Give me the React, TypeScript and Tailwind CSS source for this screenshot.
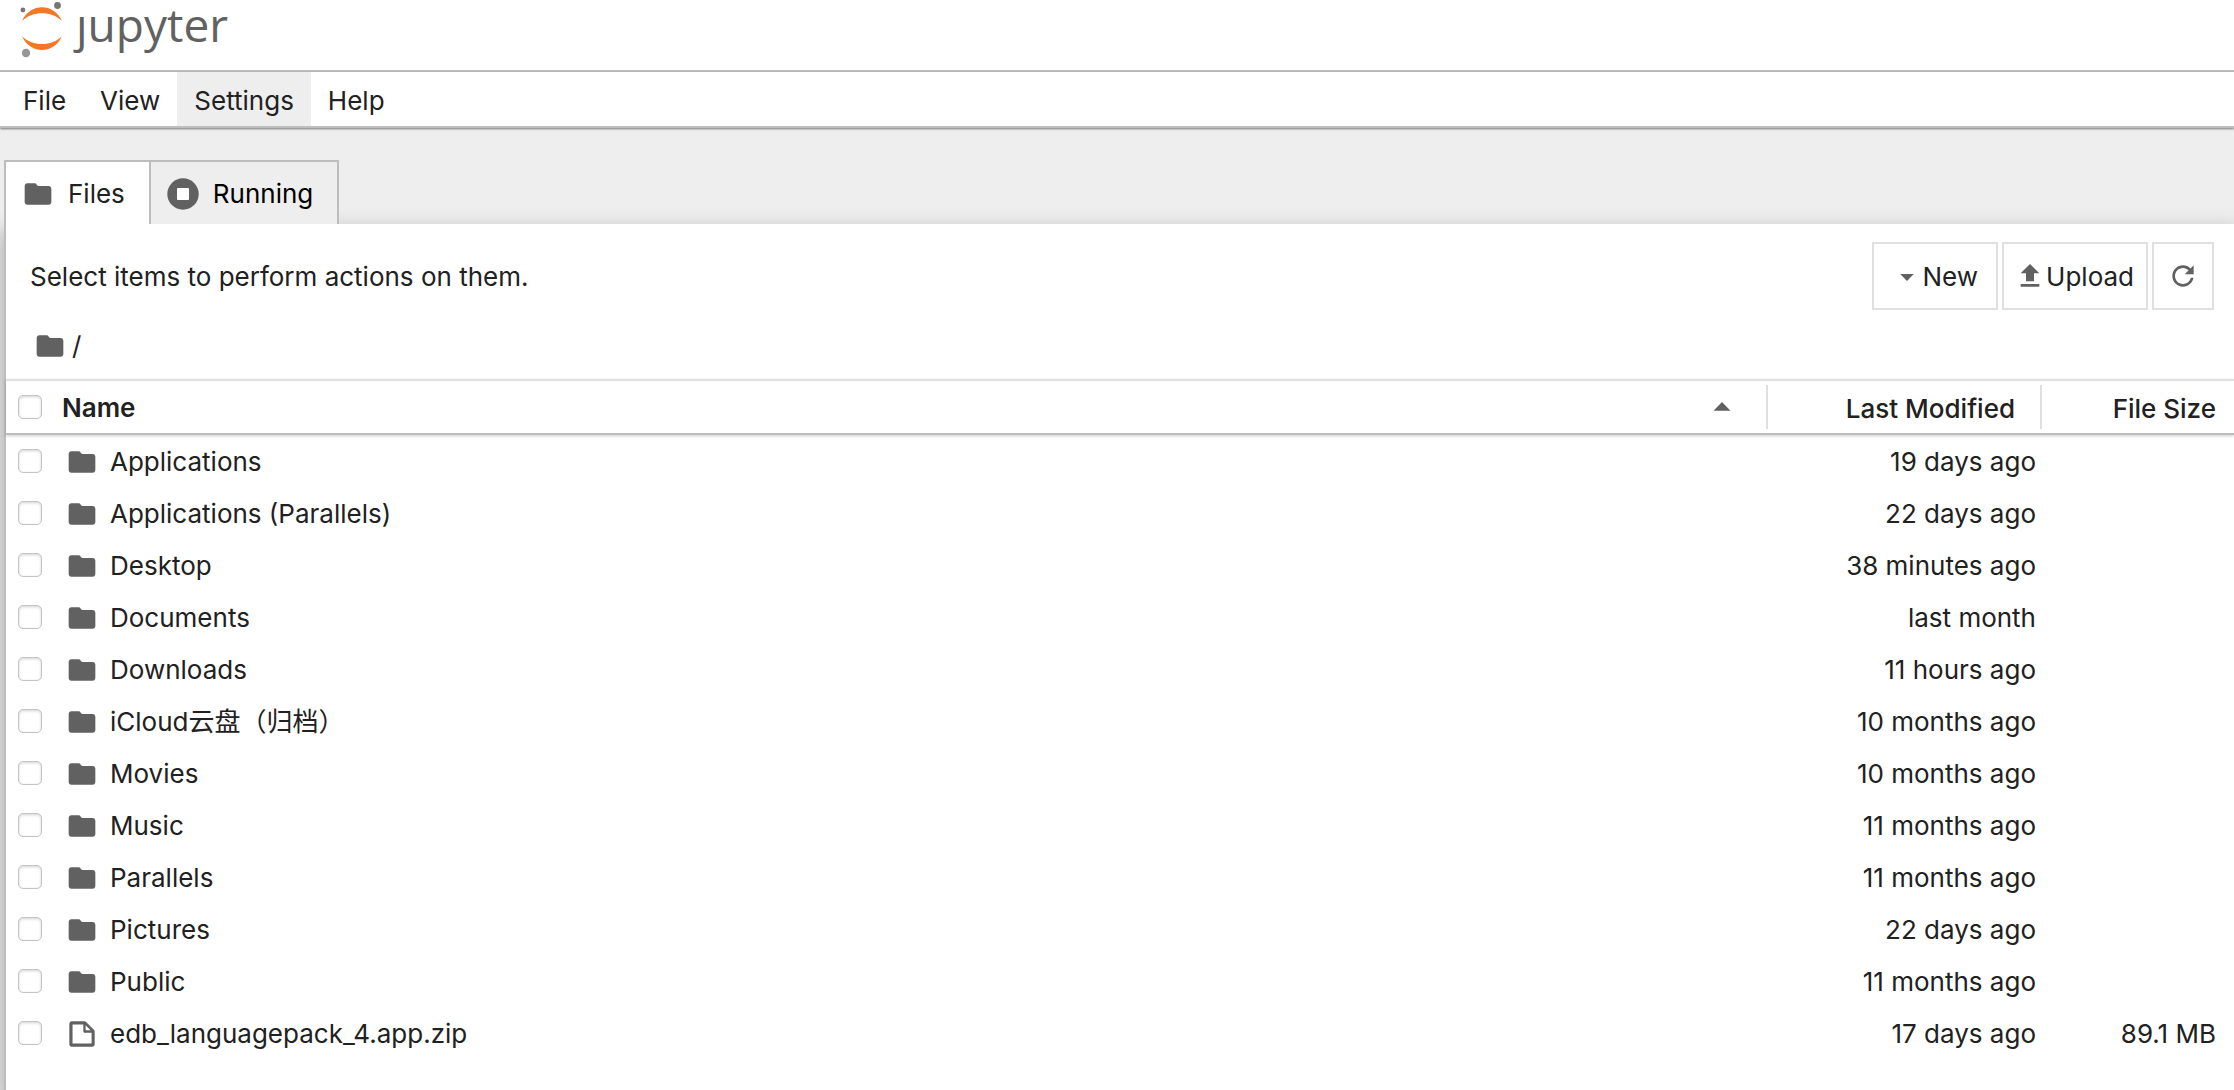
import { useState } from 'react'
import clsx from 'clsx'

type Entry = { name: string; modified: string; size?: string; kind?: 'file' }

const entries: Entry[] = [
  { name: 'Applications', modified: '19 days ago' },
  { name: 'Applications (Parallels)', modified: '22 days ago' },
  { name: 'Desktop', modified: '38 minutes ago' },
  { name: 'Documents', modified: 'last month' },
  { name: 'Downloads', modified: '11 hours ago' },
  { name: 'iCloud云盘（归档）', modified: '10 months ago' },
  { name: 'Movies', modified: '10 months ago' },
  { name: 'Music', modified: '11 months ago' },
  { name: 'Parallels', modified: '11 months ago' },
  { name: 'Pictures', modified: '22 days ago' },
  { name: 'Public', modified: '11 months ago' },
  { name: 'edb_languagepack_4.app.zip', modified: '17 days ago', size: '89.1 MB', kind: 'file' },
]

const icons = {
  folder: { box: 24, d: 'M10 4H4c-1.1 0-1.99.9-1.99 2L2 18c0 1.1.9 2 2 2h16c1.1 0 2-.9 2-2V8c0-1.1-.9-2-2-2h-8l-2-2z' },
  file: {
    box: 22,
    d: 'M19.3 8.2l-5.5-5.5c-.3-.3-.7-.5-1.2-.5H3.9c-.8.1-1.6.9-1.6 1.8v14.1c0 .9.7 1.6 1.6 1.6h14.2c.9 0 1.6-.7 1.6-1.6V9.4c.1-.5-.1-.9-.4-1.2zm-5.8-3.3l3.4 3.6h-3.4V4.9zm3.9 12.7H4.7c-.1 0-.2 0-.2-.2V4.7c0-.2.1-.3.2-.3h7.2v4.4s0 .8.3 1.1c.3.3 1.1.3 1.1.3h4.3v7.2s-.1.2-.2.2z',
  },
  upload: { box: 24, d: 'M9 16h6v-6h4l-7-7-7 7h4v6zM5 18h14v2H5v-2z' },
  refresh: {
    box: 18,
    d: 'M9 13.5c-2.49 0-4.5-2.01-4.5-4.5S6.51 4.5 9 4.5c1.24 0 2.36.52 3.17 1.33L10 8h5V3l-1.76 1.76C12.15 3.68 10.66 3 9 3 5.69 3 3.01 5.69 3.01 9S5.69 15 9 15c2.97 0 5.43-2.16 5.9-5h-1.52c-.46 2-2.24 3.5-4.38 3.5z',
  },
  caretDown: { box: 18, d: 'M5.2 7.9L9 11.8l3.8-3.9H5.2z' },
  caretUp: { box: 18, d: 'M5.2 10.7L9 6.8l3.8 3.9H5.2z' },
}

function Icon({ name, className = 'size-8' }: { name: keyof typeof icons; className?: string }) {
  const { box, d } = icons[name]
  return (
    <svg viewBox={`0 0 ${box} ${box}`} className={clsx('shrink-0 fill-[#616161]', className)} aria-hidden="true">
      <path d={d} />
    </svg>
  )
}

function Logo() {
  return (
    <a href="#" aria-label="jupyter" className="flex items-start pl-5">
      <svg viewBox="20 0 44 60" className="h-[60px] w-11" aria-hidden="true">
        <path fill="#f37726" d="M22 21C30 2.5 54 2.5 62 21C52 10.5 32 10.5 22 21z" />
        <path fill="#f37726" d="M22 36C30 54.7 54 54.7 62 36C52 46.7 32 46.7 22 36z" />
        <circle cx="57.5" cy="5.5" r="3.4" fill="#767677" />
        <circle cx="22.9" cy="10" r="2.4" fill="#767677" />
        <circle cx="26" cy="53" r="4.2" fill="#989798" />
      </svg>
      <span className="ml-3 font-['Open_Sans','Noto_Sans',sans-serif] text-[46px] leading-[48px] text-[#616161]">ȷupyter</span>
    </a>
  )
}

function Checkbox({ label }: { label: string }) {
  return (
    <input
      type="checkbox"
      aria-label={label}
      className="block size-6 shrink-0 appearance-none rounded-[5px] border border-[#c4c4c4] bg-white shadow-[inset_0_1px_3px_rgba(0,0,0,0.18)] checked:bg-[#1976d2]"
    />
  )
}

export default function App() {
  const [tab, setTab] = useState<'files' | 'running'>('files')

  return (
    <div className="flex min-h-screen flex-col bg-[#eeeeee] font-[Inter,'Noto_Sans_CJK_SC',sans-serif] text-[26px] leading-8 text-[#212121]">
      <header className="h-[72px] border-b-2 border-[#bdbdbd] bg-white">
        <Logo />
      </header>

      <nav className="relative flex h-14 border-b-2 border-[#bdbdbd] bg-white pl-1.5 shadow-[0_1px_2px_rgba(0,0,0,0.5)]">
        {['File', 'View', 'Settings', 'Help'].map((item) => (
          <button key={item} className={clsx('px-[17px] pt-1', item === 'Settings' && 'bg-[#eeeeee]')}>
            {item}
          </button>
        ))}
      </nav>

      <div role="tablist" className="relative z-10 mt-8 ml-1 flex h-16 items-stretch">
        <button
          role="tab"
          aria-selected={tab === 'files'}
          onClick={() => setTab('files')}
          className="flex items-center gap-3.5 border-x-2 border-t-2 border-[#bdbdbd] bg-white pt-0.5 pr-6 pl-4"
        >
          <Icon name="folder" />
          Files
        </button>
        <button
          role="tab"
          aria-selected={tab === 'running'}
          onClick={() => setTab('running')}
          className="flex items-center gap-3.5 border-t-2 border-r-2 border-[#bdbdbd] bg-[#eeeeee] pt-0.5 pr-6 pl-4 text-black"
        >
          <svg viewBox="0 0 32 32" className="size-8" aria-hidden="true">
            <circle cx="16" cy="16" r="15.7" fill="#616161" />
            <rect x="10" y="10" width="12" height="12" rx="1" fill="#fff" />
          </svg>
          Running
        </button>
      </div>

      <main className="ml-1 flex-1 border-l-2 border-[#bdbdbd] bg-white shadow-[0_10px_20px_4px_rgba(0,0,0,0.25)]">
        <div className="flex items-center gap-1 pt-[18px] pr-5 pl-6">
          <p className="flex-1 pt-0.5">Select items to perform actions on them.</p>
          <button className="flex h-[68px] items-center border-2 border-[#e0e0e0] pr-[18px] pl-[17px]">
            <Icon name="caretDown" />
            <span className="pt-0.5">New</span>
          </button>
          <button className="flex h-[68px] items-center border-2 border-[#e0e0e0] pr-3 pl-2.5">
            <Icon name="upload" />
            <span className="pt-0.5">Upload</span>
          </button>
          <button aria-label="Refresh" className="flex h-[68px] items-center border-2 border-[#e0e0e0] px-[13px]">
            <Icon name="refresh" />
          </button>
        </div>

        <div className="flex h-[69px] items-center gap-1.5 pt-0.5 pl-7">
          <Icon name="folder" />
          <span>/</span>
        </div>

        <table className="w-full table-fixed border-separate border-spacing-0">
          <thead className="shadow-[0_1px_3px_rgba(0,0,0,0.2)]">
            <tr className="h-14">
              <th className="border-t-2 border-b-2 border-t-[#e0e0e0] border-b-[#bdbdbd] p-0 text-left font-semibold">
                <div className="flex h-[52px] items-center pr-6 pl-3">
                  <Checkbox label="Select all" />
                  <span className="ml-5 flex-1 pt-0.5">Name</span>
                  <Icon name="caretUp" className="size-10" />
                </div>
              </th>
              <th className="w-[274px] border-t-2 border-b-2 border-t-[#e0e0e0] border-b-[#bdbdbd] p-0 text-right font-medium">
                <div className="flex h-11 items-center justify-end border-l-2 border-[#e0e0e0] pt-1 pr-[25px]">Last Modified</div>
              </th>
              <th className="w-[194px] border-t-2 border-b-2 border-t-[#e0e0e0] border-b-[#bdbdbd] p-0 text-right font-medium">
                <div className="flex h-11 items-center justify-end border-l-2 border-[#e0e0e0] pt-1 pr-[18px]">File Size</div>
              </th>
            </tr>
          </thead>
          <tbody>
            {entries.map((e) => (
              <tr key={e.name} className="h-[52px] hover:bg-[#f5f5f5]">
                <td className="p-0">
                  <div className="flex items-center pl-3">
                    <Checkbox label={e.name} />
                    <span className="ml-6 flex items-center gap-3 pt-0.5">
                      <Icon name={e.kind ?? 'folder'} />
                      {e.name}
                    </span>
                  </div>
                </td>
                <td className="pt-0.5 pr-1 pb-0 pl-0 text-right">{e.modified}</td>
                <td className="pt-0.5 pr-[18px] pb-0 pl-0 text-right">{e.size}</td>
              </tr>
            ))}
          </tbody>
        </table>
      </main>
    </div>
  )
}
